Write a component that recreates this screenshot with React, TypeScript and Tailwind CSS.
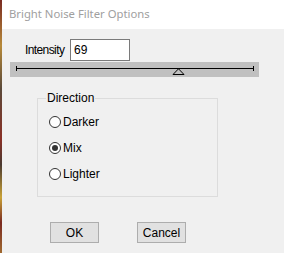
export default function App() {
  return (
    <div className="flex w-[284px] h-[253px] overflow-hidden font-['Liberation_Sans',Arial,sans-serif] text-[12px] text-black">
      <div className="w-[2px] shrink-0 bg-[linear-gradient(to_bottom,#7a2b22,#b78a3a_18%,#5b4a3a_35%,#8a3026_55%,#4a3a30_65%,#c9a237_78%,#7a2a20_88%,#a06a30)]" />
      <div className="flex flex-col flex-1">
        <div className="h-[29px] shrink-0 bg-white flex items-center pl-[7px] pb-[1px] font-['Segoe_UI','Noto_Sans',sans-serif] text-[11.3px] text-[#a0a0a0]">
          Bright Noise Filter Options
        </div>
        <div className="flex-1 bg-[#f0f0f0] flex flex-col">
          <div className="flex items-center mt-[10px] ml-[23px] h-[22px]">
            <span className="w-[45px] tracking-[-0.6px]">Intensity</span>
            <div className="w-[60px] h-[22px] border border-[#7a7a7a] bg-white pl-[3px] flex items-center leading-none">
              69
            </div>
          </div>
          <Slider />
          <fieldset className="ml-[35px] mt-[14px] w-[181px] h-[106px] border border-[#dcdcdc] px-[11px]">
            <legend className="ml-[-3px] px-[1px] leading-[14px]">Direction</legend>
            <div className="flex flex-col gap-[14px] mt-[11px]">
              <Radio label="Darker" />
              <Radio label="Mix" checked />
              <Radio label="Lighter" />
            </div>
          </fieldset>
          <div className="flex gap-[38px] ml-[48px] mt-[25px]">
            <Button>OK</Button>
            <Button>Cancel</Button>
          </div>
        </div>
      </div>
    </div>
  )
}

function Slider() {
  return (
    <div className="relative ml-[8px] mt-[1px] w-[249px] h-[15px] bg-[#c0c0c0]">
      <div className="absolute left-[6px] right-[5px] top-[6px] h-[1px] bg-black" />
      <div className="absolute left-[6px] top-[4px] w-[1px] h-[5px] bg-black" />
      <div className="absolute right-[5px] top-[4px] w-[1px] h-[5px] bg-black" />
      <svg className="absolute left-[162px] top-[6px]" width="13" height="7" viewBox="0 0 13 7">
        <path d="M6.5 0.8 L1 6.5 L12 6.5 Z" fill="#c0c0c0" stroke="black" strokeWidth="1" />
      </svg>
    </div>
  )
}

function Radio({ label, checked }: { label: string; checked?: boolean }) {
  return (
    <label className="flex items-center h-[12px]">
      <span className="w-[12px] h-[12px] rounded-full border border-[#333] bg-white flex items-center justify-center shrink-0">
        {checked && <span className="w-[6px] h-[6px] rounded-full bg-[#333]" />}
      </span>
      <span className="ml-[2px] leading-none">{label}</span>
    </label>
  )
}

function Button({ children }: { children: React.ReactNode }) {
  return (
    <button className="w-[49px] h-[21px] bg-[#e1e1e1] border border-[#adadad] flex items-center justify-center leading-none">
      {children}
    </button>
  )
}
